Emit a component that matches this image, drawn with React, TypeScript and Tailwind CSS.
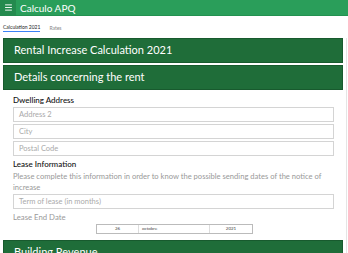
import { Menu } from 'lucide-react';

export default function App() {
  return (
    <div className="w-[348px] h-[253px] overflow-hidden bg-white relative" style={{ fontFamily: 'Lato, "Open Sans", sans-serif' }}>
      {/* Top bar */}
      <div className="flex items-center h-[16px] bg-[#2a9e5a] border-b border-[#239150]">
        <div className="w-[16px] h-[16px] bg-[#248a4e] flex items-center justify-center">
          <Menu className="w-[9px] h-[9px] text-white" strokeWidth={2.5} />
        </div>
        <span className="ml-[4px] text-[10px] text-white leading-none">Calculo APQ</span>
      </div>

      {/* Tabs */}
      <div className="flex items-end gap-[9px] px-[3px] h-[22px] pb-[6px] text-[5px]">
        <span className="text-[#222] border-b border-[#3b82f6] leading-[7px]">Calculation 2021</span>
        <span className="text-[#888] leading-[7px]">Rates</span>
      </div>

      <div className="pl-[3px] pr-[5px]">
        <div className="h-[25px] bg-[#1f6d39] border border-[#185a2e] flex items-center pl-[10px] text-white text-[11px]">
          Rental Increase Calculation 2021
        </div>
        <div className="h-[2px]" />
        <div className="h-[25px] bg-[#1f6d39] border border-[#185a2e] flex items-center pl-[10px] text-white text-[11px]">
          Details concerning the rent
        </div>

        <div className="pl-[10px] pr-[9px] pt-[3px]">
          <div className="text-[8px] text-[#111] font-medium h-[14px] leading-[14px]">Dwelling Address</div>
          <div className="flex flex-col gap-[2px]">
            <Field text="Address 2" />
            <Field text="City" />
            <Field text="Postal Code" />
          </div>
          <div className="text-[8px] text-[#111] font-medium mt-[1px] h-[14px] leading-[14px]">Lease Information</div>
          <div className="text-[7.6px] text-[#999] leading-[11px]">
            Please complete this information in order to know the possible sending dates of the notice of increase
          </div>
          <div className="mt-[1px]">
            <Field text="Term of lease (in months)" />
          </div>
          <div className="text-[7.75px] text-[#999] mt-[2px] leading-[12px]">Lease End Date</div>
          <div className="flex ml-[83px] w-[157px] h-[10px] border border-[#bbb] mt-[1px] text-[4.5px] text-[#444]">
            <div className="w-[42px] flex items-center justify-center border-r border-[#ddd]">26</div>
            <div className="flex-1 flex items-center pl-[3px] border-r border-[#ddd]">octobre</div>
            <div className="w-[42px] flex items-center justify-center">2021</div>
          </div>
        </div>

        <div className="mt-[6px] h-[25px] bg-[#1f6d39] border border-[#185a2e] flex items-center pl-[10px] text-white text-[11px]">
          Building Revenue
        </div>
      </div>

      {/* scrollbar edge */}
      <div className="absolute right-[1px] top-[38px] bottom-0 w-px bg-[#e5e5e5]" />
    </div>
  );
}

function Field({ text }: { text: string }) {
  return (
    <div className="h-[15px] border border-[#d4d4d4] flex items-center pl-[5px] text-[7.5px] text-[#aaa]">
      {text}
    </div>
  );
}
